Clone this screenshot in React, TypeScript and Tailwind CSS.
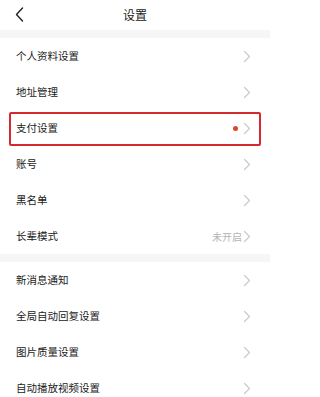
import React from 'react';

type Row = { label: string; value?: string; dot?: boolean; highlight?: boolean };

const groupOne: Row[] = [
  { label: '个人资料设置' },
  { label: '地址管理' },
  { label: '支付设置', dot: true, highlight: true },
  { label: '账号' },
  { label: '黑名单' },
  { label: '长辈模式', value: '未开启' },
];

const groupTwo: Row[] = [
  { label: '新消息通知' },
  { label: '全局自动回复设置' },
  { label: '图片质量设置' },
  { label: '自动播放视频设置' },
];

const Chevron = () => (
  <svg width="8" height="13" viewBox="0 0 8 13" fill="none" className="shrink-0">
    <path d="M1.5 1.5 6.5 6.5 1.5 11.5" stroke="#c9c9c9" strokeWidth="1.2" strokeLinecap="round" strokeLinejoin="round" />
  </svg>
);

const SettingRow: React.FC<{ row: Row }> = ({ row }) => (
  <div className="relative flex h-[36px] items-center justify-between pl-[16px] pr-[19px]">
    {row.highlight && (
      <div className="pointer-events-none absolute left-[9px] right-[9px] top-[2px] bottom-0 rounded-[2px] border-2 border-[#d6282f]" />
    )}
    <span className="text-[10.5px] text-[#1a1a1a]">{row.label}</span>
    <div className="flex items-center">
      {row.value && <span className="mr-[1px] text-[10px] text-[#b5b5b5]">{row.value}</span>}
      {row.dot && <span className="mr-[5px] h-[5px] w-[5px] rounded-full bg-[#d9472b]" />}
      <Chevron />
    </div>
  </div>
);

export default function App() {
  return (
    <div
      className="h-[397px] w-[270px] overflow-hidden bg-[#f6f6f6]"
      style={{ fontFamily: '"Noto Sans CJK SC", "Noto Sans", sans-serif' }}
    >
      {/* header */}
      <div className="relative flex h-[30px] items-center justify-center bg-white">
        <svg width="9" height="15" viewBox="0 0 9 15" fill="none" className="absolute left-[15px] top-[7px]">
          <path d="M7.5 1 1.5 7.5 7.5 14" stroke="#222" strokeWidth="1.4" strokeLinecap="round" strokeLinejoin="round" />
        </svg>
        <span className="text-[12px] text-[#1a1a1a]">设置</span>
      </div>

      <div className="mt-[8px] bg-white">
        {groupOne.map((row) => (
          <SettingRow key={row.label} row={row} />
        ))}
      </div>

      <div className="mt-[8px] bg-white">
        {groupTwo.map((row) => (
          <SettingRow key={row.label} row={row} />
        ))}
      </div>
    </div>
  );
}
